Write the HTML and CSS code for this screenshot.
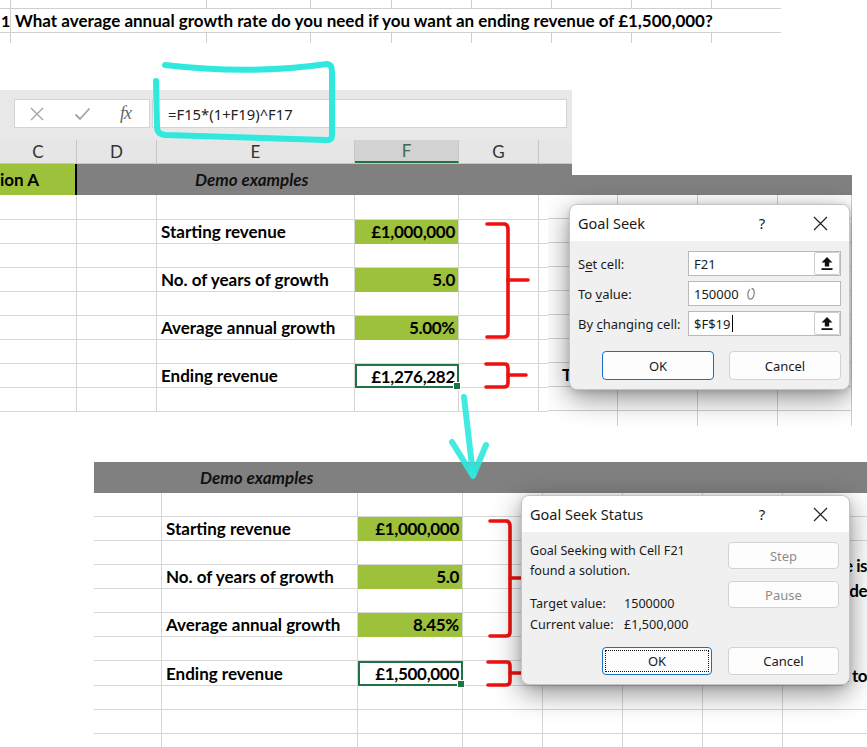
FILE: index.html
```html
<!DOCTYPE html>
<html lang="en">
<head>
<meta charset="utf-8">
<title>Goal Seek example</title>
<link rel="stylesheet" href="styles.css">
</head>
<body>
<div class="canvas">

  <!-- Row 21 strip -->
  <div class="strip">
    <div class="strip-row top"><span></span><span></span><span></span><span></span><span></span><span></span><span></span><span></span><span></span></div>
    <div class="strip-main"><span class="rownum">1</span><span class="question">What average annual growth rate do you need if you want an ending revenue of £1,500,000?</span></div>
    <div class="strip-row bottom"><span></span><span></span><span></span><span></span><span></span><span></span><span></span><span></span><span></span></div>
  </div>

  <!-- First sheet capture -->
  <div class="sheet1">
    <div class="fbar">
      <div class="fbar-btns">
        <svg class="ico-x" width="14" height="14" viewBox="0 0 14 14"><path d="M1 1L13 13M13 1L1 13" stroke="#a3a3a3" stroke-width="1.4" fill="none"/></svg>
        <svg class="ico-ok" width="17" height="14" viewBox="0 0 17 14"><path d="M1.5 7.5L6 12L15.5 1.5" stroke="#a3a3a3" stroke-width="1.8" fill="none"/></svg>
        <span class="fx">fx</span>
      </div>
      <div class="fbar-input">=F15*(1+F19)^F17</div>
    </div>
    <div class="colhead">
      <span>C</span><span>D</span><span>E</span><span class="sel">F</span><span>G</span><span></span>
    </div>
    <div class="band band1">
      <span class="band-green">ion A</span>
      <span class="band-title">Demo examples</span>
    </div>
    <div class="grid g1">
      <span></span><span></span><span></span><span></span><span></span><span></span>
      <span></span><span></span><span class="lbl">Starting revenue</span><span class="val">£1,000,000</span><span></span><span></span>
      <span></span><span></span><span></span><span></span><span></span><span></span>
      <span></span><span></span><span class="lbl">No. of years of growth</span><span class="val">5.0</span><span></span><span></span>
      <span></span><span></span><span></span><span></span><span></span><span></span>
      <span></span><span></span><span class="lbl">Average annual growth</span><span class="val">5.00%</span><span></span><span></span>
      <span></span><span></span><span></span><span></span><span></span><span></span>
      <span></span><span></span><span class="lbl">Ending revenue</span><span class="val sel">£1,276,282</span><span></span><span></span>
      <span></span><span></span><span></span><span></span><span></span><span></span>
    </div>
  </div>

  <!-- Goal Seek dialog capture -->
  <div class="shot1">
    <div class="shot1-band"></div>
    <div class="grid g3">
      <span></span><span></span><span></span><span></span>
      <span></span><span></span><span></span><span></span>
      <span></span><span></span><span></span><span></span>
      <span></span><span></span><span></span><span></span>
      <span></span><span></span><span></span><span></span>
      <span></span><span></span><span></span><span></span>
      <span></span><span></span><span></span><span></span>
      <span class="peek-t">T</span><span></span><span></span><span></span>
      <span></span><span></span><span></span><span></span>
      <span></span><span></span><span></span><span></span>
    </div>
    <div class="dlg dlg1">
      <div class="dlg-title"><span class="t">Goal Seek</span><span class="help">?</span><span class="close"><svg width="15" height="15" viewBox="0 0 15 15"><path d="M1 1L14 14M14 1L1 14" stroke="#222" stroke-width="1.2" fill="none"/></svg></span></div>
      <div class="gs-body">
        <div class="gs-row"><span class="gs-lbl">S<u>e</u>t cell:</span><span class="gs-input">F21<span class="refedit"><svg width="12" height="15" viewBox="0 0 12 15"><path d="M6 1L11.5 6.5H8.2V10.5H3.8V6.5H0.5Z" fill="#111"/><rect x="0.5" y="12.2" width="11" height="1.8" fill="#111"/></svg></span></span></div>
        <div class="gs-row"><span class="gs-lbl">To <u>v</u>alue:</span><span class="gs-input">150000<svg class="busy" width="10" height="14" viewBox="0 0 10 14"><path d="M5.5 1.5C8.5 1.5 8.8 6 7.5 9.5C6.5 12.5 3 13 2.2 10.5C1.5 8 2.5 4 3.8 2.2" stroke="#8a8a8a" stroke-width="1.3" fill="none"/></svg></span></div>
        <div class="gs-row"><span class="gs-lbl">By <u>c</u>hanging cell:</span><span class="gs-input">$F$19<span class="caret"></span><span class="refedit"><svg width="12" height="15" viewBox="0 0 12 15"><path d="M6 1L11.5 6.5H8.2V10.5H3.8V6.5H0.5Z" fill="#111"/><rect x="0.5" y="12.2" width="11" height="1.8" fill="#111"/></svg></span></span></div>
        <div class="gs-btns"><span class="btn primary">OK</span><span class="btn">Cancel</span></div>
      </div>
    </div>
  </div>

  <!-- Second sheet capture -->
  <div class="sheet2">
    <div class="band band2"><span class="band-title">Demo examples</span></div>
    <div class="grid g2">
      <span></span><span></span><span></span><span></span><span></span><span></span><span></span><span></span>
      <span></span><span class="lbl">Starting revenue</span><span class="val">£1,000,000</span><span></span><span></span><span></span><span></span><span></span>
      <span></span><span></span><span></span><span></span><span></span><span></span><span></span><span></span>
      <span></span><span class="lbl">No. of years of growth</span><span class="val">5.0</span><span></span><span></span><span></span><span></span><span></span>
      <span></span><span></span><span></span><span></span><span></span><span></span><span></span><span></span>
      <span></span><span class="lbl">Average annual growth</span><span class="val">8.45%</span><span></span><span></span><span></span><span></span><span></span>
      <span></span><span></span><span></span><span></span><span></span><span></span><span></span><span></span>
      <span></span><span class="lbl">Ending revenue</span><span class="val sel">£1,500,000</span><span></span><span></span><span></span><span></span><span></span>
      <span></span><span></span><span></span><span></span><span></span><span></span><span></span><span></span>
      <span></span><span></span><span></span><span></span><span></span><span></span><span></span><span></span>
      <span></span><span></span><span></span><span></span><span></span><span></span><span></span><span></span>
    </div>
    <div class="peek">
      <span>e is</span>
      <span>de</span>
      <span class="peek-low">t to</span>
    </div>
    <div class="dlg dlg2">
      <div class="dlg-title"><span class="t">Goal Seek Status</span><span class="help">?</span><span class="close"><svg width="15" height="15" viewBox="0 0 15 15"><path d="M1 1L14 14M14 1L1 14" stroke="#222" stroke-width="1.2" fill="none"/></svg></span></div>
      <div class="gss-body">
        <div class="gss-text">
          <p>Goal Seeking with Cell F21</p>
          <p>found a solution.</p>
          <dl class="gss-vals">
            <dt>Target value:</dt><dd>1500000</dd>
            <dt>Current value:</dt><dd>£1,500,000</dd>
          </dl>
        </div>
        <div class="gss-side">
          <span class="btn off">Step</span>
          <span class="btn off">Pause</span>
        </div>
      </div>
      <div class="gss-foot">
        <span class="btn primary focus"><span class="focus-ring">OK</span></span>
        <span class="btn">Cancel</span>
      </div>
    </div>
  </div>

  <!-- hand-drawn annotations -->
  <svg class="marks" width="867" height="747" viewBox="0 0 867 747">
    <g fill="none" stroke="#2fe8de" stroke-width="6" stroke-linecap="round" stroke-linejoin="round">
      <path d="M165,65 Q250,75 327,64 Q332,64 332,72 L332,135 Q332,141 325,140 L165,135 Q157,134 157,127 L156,81"/>
    </g>
    <g fill="none" stroke="#ee1111" stroke-width="3.6" stroke-linecap="round" stroke-linejoin="round">
      <path d="M487,224 L505,224 Q508,225 508,229 L508,333 Q508,337 504,337 L487,337"/>
      <path d="M508,280 L528,280"/>
      <path d="M486,364 L505,364 Q508,364 508,368 L508,383 Q508,387 504,387 L486,387"/>
      <path d="M508,375 L526,375"/>
      <path d="M490,521 L507,521 Q510,522 510,526 L510,632 Q510,636 506,636 L490,636"/>
      <path d="M510,578 L526,578"/>
      <path d="M488,662 L507,662 Q510,662 510,666 L510,681 Q510,685 506,685 L488,685"/>
      <path d="M510,673 L526,673"/>
    </g>
    <g fill="none" stroke="#2fe8de" stroke-opacity="0.9" stroke-width="6" stroke-linecap="round" stroke-linejoin="round">
      <path d="M464,397 L473,475"/>
      <path d="M452,442 L473,476 L486,445"/>
    </g>
  </svg>
</div>
</body>
</html>
```
FILE: styles.css
```css
* { box-sizing: border-box; margin: 0; padding: 0; }
body { margin: 0; background: #fff; font-family: "Lato", "Liberation Sans", sans-serif; color: #000; }

.canvas { position: relative; width: 867px; height: 747px; overflow: hidden; background: #fff; }

/* ---------- top strip ---------- */
.strip { position: absolute; left: 0; top: 0; width: 781px; }
.strip-row { display: grid; grid-template-columns: 11px 196px 104px 81px 80px 80px 80px 80px 69px; }
.strip-row > span { border-right: 1px solid #cfcfcf; }
.strip-row > span:last-child { border-right: none; }
.strip-row.top { height: 9px; border-bottom: 1px solid #cfcfcf; }
.strip-row.bottom { height: 10px; }
.strip-main { display: flex; height: 24px; border-bottom: 1px solid #cfcfcf; align-items: center; }
.rownum { width: 11px; height: 100%; border-right: 1px solid #cfcfcf; font-weight: 700; font-size: 16px; display: flex; align-items: center; padding-left: 1px; }
.question { padding-left: 4px; font-weight: 700; font-size: 17px; white-space: nowrap; }

/* ---------- sheet 1 ---------- */
.sheet1 { position: absolute; left: 0; top: 90px; width: 572px; }
.fbar { height: 50px; background: #e8e8e8; display: flex; padding: 9px 0 12px 14px; }
.fbar-btns { width: 136px; height: 29px; background: #fff; border: 1px solid #d4d4d4; display: flex; align-items: center; padding-left: 15px; }
.ico-ok { margin-left: 30px; }
.fx { margin-left: 29px; font-family: "Liberation Serif", serif; font-style: italic; font-size: 18px; color: #666; letter-spacing: -1px; }
.fbar-input { width: 415px; height: 29px; margin-left: 2px; background: #fff; border: 1px solid #d4d4d4; display: flex; align-items: center; padding-left: 15px; font-family: "Noto Sans", "Open Sans", sans-serif; font-size: 14.8px; color: #222; }

.colhead { height: 24px; background: #e6e6e6; display: grid; grid-template-columns: 77px 80px 198px 104px 80px 33px; border-bottom: 1px solid #c6c6c6; }
.colhead > span { border-right: 1px solid #c6c6c6; display: flex; align-items: center; justify-content: center; font-size: 17px; color: #333; }
.colhead > span:last-child { border-right: none; }
.colhead > span.sel { background: #d2d2d2; border-bottom: 2px solid #217346; color: #3d6a4f; }

.band { background: #808080; height: 31px; display: flex; align-items: center; }
.band1 { width: 572px; }
.band-green { width: 77px; height: 100%; background: #9ec13c; border-right: 2px solid #000; display: flex; align-items: center; font-weight: 700; font-size: 17px; }
.band-title { font-weight: 700; font-style: italic; font-size: 17px; color: #111; }
.band1 .band-title { padding-left: 118px; }

.grid { display: grid; }
.grid > span { border-right: 1px solid #d6d6d6; border-bottom: 1px solid #d6d6d6; display: flex; align-items: center; }
.g1 { grid-template-columns: 77px 80px 198px 104px 80px 33px; grid-template-rows: 25px repeat(8, 24px); }
.g1 > span:nth-child(6n) { border-right: none; }

.lbl { font-weight: 700; font-size: 17px; padding-left: 4px; white-space: nowrap; }
.grid > span.val { background: #9ec13c; justify-content: flex-end; padding-right: 3px; font-weight: 700; font-size: 17px; letter-spacing: -0.3px; border-bottom-color: #9ec13c; }
.grid > span.val.sel { background: #fff; border: 2px solid #217346; position: relative; padding-right: 2px; }
.val.sel::after { content: ""; position: absolute; right: -4px; bottom: -4px; width: 6px; height: 6px; background: #217346; border: 1px solid #fff; }

/* ---------- Goal Seek capture ---------- */
.shot1 { position: absolute; left: 548px; top: 175px; width: 304px; height: 251px; overflow: hidden; background: #fff; }
.shot1-band { height: 20px; background: #808080; }
.g3 { grid-template-columns: 70px 80px 80px 74px; grid-template-rows: repeat(10, 24px); }
.g3 > span { border-color: #cfcfcf; }
.peek-t { padding-left: 14px; font-weight: 700; font-size: 17px; }

.dlg { position: absolute; background: #f0f0f0; border: 1px solid #c4c4c4; border-radius: 8px; box-shadow: 0 8px 28px rgba(0,0,0,0.45), 0 2px 6px rgba(0,0,0,0.12); font-family: "Noto Sans", "Open Sans", sans-serif; color: #1a1a1a; overflow: hidden; z-index: 5; }
.dlg-title { height: 36px; background: #fff; display: flex; align-items: center; padding: 0 15px 0 8px; font-size: 14.5px; }
.dlg-title .t { flex: 1; }
.dlg-title .help { width: 20px; text-align: center; margin-right: 34px; font-size: 15px; }
.dlg-title .close { width: 28px; display: flex; justify-content: center; }

.dlg1 { left: 21px; top: 29px; width: 281px; height: 186px; }
.gs-body { padding: 10px 0 0 8px; }
.gs-row { display: flex; align-items: center; height: 25px; margin-bottom: 5px; }
.gs-lbl { width: 110px; font-size: 13px; }
.gs-lbl u { text-underline-offset: 2px; }
.gs-input { width: 153px; height: 25px; border: 1px solid #b9b9b9; background: #fff; display: flex; align-items: center; padding-left: 5px; font-size: 13px; }
.refedit { margin-left: auto; width: 26px; height: 23px; border: 1px solid #cdcdcd; border-radius: 2px; background: #fff; display: flex; align-items: center; justify-content: center; }
.busy { margin-left: 7px; }
.caret { width: 1px; height: 17px; background: #000; margin-left: 1px; }
.gs-btns { display: flex; gap: 15px; padding-left: 24px; margin-top: 15px; }
.btn { width: 112px; height: 29px; border: 1px solid #d2d2d2; border-radius: 4px; background: #fdfdfd; display: flex; align-items: center; justify-content: center; font-size: 13px; color: #1a1a1a; }
.btn.primary { border-color: #1b6fc2; }
.btn.off { color: #8d8d8d; height: 27px; width: 111px; }

/* ---------- sheet 2 ---------- */
.sheet2 { position: absolute; left: 94px; top: 462px; width: 773px; height: 285px; overflow: hidden; }
.band2 .band-title { padding-left: 106px; }
.g2 { grid-template-columns: 68px 196px 105px 80px 80px 80px 80px 84px; grid-template-rows: repeat(7, 24px) 25px repeat(3, 24px); }
.g2 > span:nth-child(8n) { border-right: none; }
.peek { position: absolute; right: 0; top: 91px; display: flex; flex-direction: column; align-items: flex-end; font-weight: 700; font-size: 17px; line-height: 25px; letter-spacing: -0.5px; background: #fff; }
.peek span { white-space: nowrap; }
.peek-low { margin-top: 60px; }

.dlg2 { left: 427px; top: 33px; width: 329px; height: 190px; }
.gss-body { display: flex; height: 115px; padding: 10px 10px 0 8px; }
.gss-text { flex: 1; font-size: 12.6px; }
.gss-text p { line-height: 20px; }
.gss-text p:first-child { margin-top: -1px; }
.gss-vals { display: grid; grid-template-columns: 94px auto; margin-top: 12px; line-height: 21px; }
.gss-side { width: 111px; display: flex; flex-direction: column; gap: 12px; }
.gss-side .btn { font-size: 13px; }
.gss-foot { display: flex; justify-content: flex-end; gap: 16px; padding-right: 10px; }
.gss-foot .btn { width: 111px; height: 28px; }
.gss-foot .btn.focus { width: 110px; }
.focus-ring { width: 102px; height: 20px; outline: 1px dotted #111; display: flex; align-items: center; justify-content: center; }

/* ---------- annotations ---------- */
.marks { position: absolute; left: 0; top: 0; z-index: 3; pointer-events: none; }
```
